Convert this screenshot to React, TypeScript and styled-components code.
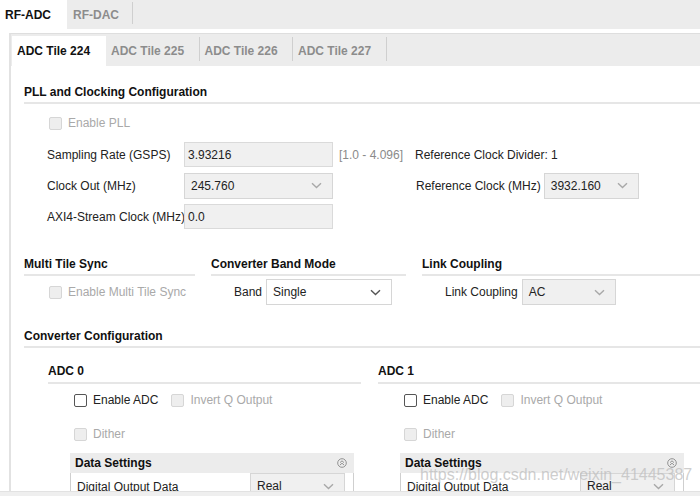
import React from 'react';
import styled, { createGlobalStyle } from 'styled-components';

const GlobalStyle = createGlobalStyle`
  html, body {
    margin: 0;
    padding: 0;
    background: #fff;
  }
  body {
    font-family: 'Liberation Sans', Arial, sans-serif;
    font-size: 12px;
    color: #222;
  }
`;

// 작은 v 모양 화살표
const Chevron = ({ dark }: { dark?: boolean }) => (
  <svg width="11" height="7" viewBox="0 0 11 7">
    <path
      d="M1 1.2 L5.5 5.5 L10 1.2"
      fill="none"
      stroke={dark ? '#555' : '#a8a8a8'}
      strokeWidth="1.4"
    />
  </svg>
);

const CollapseIcon = () => (
  <svg width="10" height="10" viewBox="0 0 10 10">
    <circle cx="5" cy="5" r="4.3" fill="none" stroke="#888" strokeWidth="0.9" />
    <path d="M3 4.6 L5 2.8 L7 4.6 M3 7 L5 5.2 L7 7" fill="none" stroke="#888" strokeWidth="0.9" />
  </svg>
);

const Check = ({ label, disabled }: { label: string; disabled?: boolean }) => (
  <CheckWrap $disabled={disabled}>
    <Box $disabled={disabled} />
    <span>{label}</span>
  </CheckWrap>
);

const Select = ({
  value,
  width,
  white,
}: {
  value: string;
  width: number;
  white?: boolean;
}) => (
  <SelectBox $width={width} $white={white}>
    <span>{value}</span>
    <Chevron dark={white} />
  </SelectBox>
);

const AdcBlock = ({ name }: { name: string }) => (
  <AdcColumn>
    <SubTitle>{name}</SubTitle>
    <AdcChecks>
      <CheckRow>
        <Check label="Enable ADC" />
        <Check label="Invert Q Output" disabled />
      </CheckRow>
      <CheckRow>
        <Check label="Dither" disabled />
      </CheckRow>
    </AdcChecks>
    <DataSettings>
      <DataHeader>
        <span>Data Settings</span>
        <CollapseIcon />
      </DataHeader>
      <DataRow>
        <DataLabel>Digital Output Data</DataLabel>
        <Select value="Real" width={95} />
      </DataRow>
    </DataSettings>
  </AdcColumn>
);

const App = () => {
  return (
    <Page>
      <GlobalStyle />
      <Main>
        <TopTabs>
          <TopTab $active>RF-ADC</TopTab>
          <TopTab>RF-DAC</TopTab>
        </TopTabs>
        <Content>
          <InnerPanel>
            <InnerTabs>
              <InnerTab $active>ADC Tile 224</InnerTab>
              <InnerTab>ADC Tile 225</InnerTab>
              <InnerTab>ADC Tile 226</InnerTab>
              <InnerTab>ADC Tile 227</InnerTab>
            </InnerTabs>
            <PanelBody>
              <SectionTitle>PLL and Clocking Configuration</SectionTitle>
              <PllCheck>
                <Check label="Enable PLL" disabled />
              </PllCheck>
              <ClockGrid>
                <Label>Sampling Rate (GSPS)</Label>
                <TextInput>3.93216</TextInput>
                <Range>[1.0 - 4.096]</Range>
                <Label>Reference Clock Divider: 1</Label>

                <Label>Clock Out (MHz)</Label>
                <Select value="245.760" width={149} />
                <span />
                <RefClock>
                  <Label>Reference Clock (MHz)</Label>
                  <Select value="3932.160" width={95} />
                </RefClock>

                <Label>AXI4-Stream Clock (MHz)</Label>
                <TextInput>0.0</TextInput>
              </ClockGrid>

              <ThreeCols>
                <div>
                  <SectionTitle>Multi Tile Sync</SectionTitle>
                  <ColRow $indent={25}>
                    <Check label="Enable Multi Tile Sync" disabled />
                  </ColRow>
                </div>
                <div>
                  <SectionTitle>Converter Band Mode</SectionTitle>
                  <ColRow $indent={23}>
                    <Label>Band</Label>
                    <Select value="Single" width={126} white />
                  </ColRow>
                </div>
                <div>
                  <SectionTitle>Link Coupling</SectionTitle>
                  <ColRow $indent={23}>
                    <Label>Link Coupling</Label>
                    <Select value="AC" width={94} />
                  </ColRow>
                </div>
              </ThreeCols>

              <ConverterTitle>Converter Configuration</ConverterTitle>
              <AdcCols>
                <AdcBlock name="ADC 0" />
                <AdcBlock name="ADC 1" />
              </AdcCols>
            </PanelBody>
          </InnerPanel>
        </Content>
      </Main>
      <BottomStrip />
      <Watermark>https://blog.csdn.net/weixin_41445387</Watermark>
    </Page>
  );
};

export default App;

const Page = styled.div`
  position: relative;
  width: 700px;
  height: 496px;
  display: flex;
  flex-direction: column;
  overflow: hidden;
`;

const Main = styled.div`
  flex: 1;
  min-height: 0;
  overflow: hidden;
`;

const TopTabs = styled.div`
  display: flex;
  height: 29px;
  background: #ececec;
`;

const TopTab = styled.div<{ $active?: boolean }>`
  width: ${(p) => (p.$active ? '67px' : '66px')};
  box-sizing: border-box;
  padding-left: ${(p) => (p.$active ? '5px' : '6px')};
  padding-top: 8px;
  font-weight: bold;
  font-size: 12px;
  background: ${(p) => (p.$active ? '#fff' : 'transparent')};
  color: ${(p) => (p.$active ? '#111' : '#8c8c8c')};
  position: relative;
  &::after {
    content: '';
    display: ${(p) => (p.$active ? 'none' : 'block')};
    position: absolute;
    right: 0;
    top: 2px;
    height: 22px;
    width: 1px;
    background: #cfcfcf;
  }
`;

const Content = styled.div`
  padding: 4px 0 0 9px;
`;

const InnerPanel = styled.div`
  border-top: 1px solid #dedede;
  border-left: 2px solid #e2e2e2;
`;

const InnerTabs = styled.div`
  display: flex;
  align-items: flex-end;
  height: 32px;
  background: #ececec;
  padding-left: 1px;
`;

const InnerTab = styled.div<{ $active?: boolean }>`
  height: 30px;
  width: ${(p) => (p.$active ? '94px' : '93.5px')};
  box-sizing: border-box;
  padding: 8px 0 0 5px;
  font-weight: bold;
  font-size: 12px;
  background: ${(p) => (p.$active ? '#fff' : 'transparent')};
  color: ${(p) => (p.$active ? '#111' : '#8c8c8c')};
  position: relative;
  &::after {
    content: '';
    display: ${(p) => (p.$active ? 'none' : 'block')};
    position: absolute;
    right: 0;
    top: 1px;
    height: 24px;
    width: 1px;
    background: #cfcfcf;
  }
`;

const PanelBody = styled.div`
  padding: 19px 0 0 13px;
`;

const SectionTitle = styled.div`
  font-weight: bold;
  font-size: 12px;
  line-height: 14px;
  color: #111;
  padding-bottom: 3px;
  border-bottom: 2px solid #e6e6e6;
`;

const ConverterTitle = styled(SectionTitle)`
  margin-top: 24px;
`;

const SubTitle = styled(SectionTitle)`
  padding-bottom: 4px;
`;

const CheckWrap = styled.label<{ $disabled?: boolean }>`
  display: inline-flex;
  align-items: center;
  gap: 6px;
  font-size: 12px;
  color: ${(p) => (p.$disabled ? '#a9a9a9' : '#222')};
  white-space: nowrap;
`;

const Box = styled.span<{ $disabled?: boolean }>`
  display: inline-block;
  width: 13px;
  height: 13px;
  box-sizing: border-box;
  border-radius: 2px;
  border: 1px solid ${(p) => (p.$disabled ? '#d6d6d6' : '#555')};
  background: ${(p) => (p.$disabled ? '#eeeeee' : '#fff')};
`;

const PllCheck = styled.div`
  padding: 12px 0 0 25px;
  height: 14px;
`;

const ClockGrid = styled.div`
  display: grid;
  grid-template-columns: 137px 149px 82px auto;
  grid-auto-rows: 25px;
  row-gap: 6px;
  align-items: center;
  margin: 12px 0 0 23px;
`;

const Label = styled.span`
  font-size: 12px;
  color: #222;
  white-space: nowrap;
`;

const Range = styled.span`
  font-size: 12px;
  color: #8a8a8a;
  padding-left: 6px;
  white-space: nowrap;
`;

const TextInput = styled.div`
  height: 25px;
  box-sizing: border-box;
  border: 1px solid #dadada;
  background: #f0f0f0;
  padding: 5px 3px;
  font-size: 12px;
  color: #222;
`;

const SelectBox = styled.div<{ $width: number; $white?: boolean }>`
  width: ${(p) => p.$width}px;
  height: 26px;
  box-sizing: border-box;
  border: 1px solid #d6d6d6;
  background: ${(p) => (p.$white ? '#fff' : '#f0f0f0')};
  display: flex;
  align-items: center;
  justify-content: space-between;
  padding: 0 10px 0 6px;
  font-size: 12px;
  color: #222;
  flex-shrink: 0;
`;

const RefClock = styled.div`
  display: flex;
  align-items: center;
  gap: 3px;
  padding-left: 1px;
`;

const ThreeCols = styled.div`
  display: grid;
  grid-template-columns: 171px 195px 1fr;
  column-gap: 16px;
  margin-top: 28px;
`;

const ColRow = styled.div<{ $indent: number }>`
  display: flex;
  align-items: center;
  gap: 4px;
  height: 26px;
  margin-top: 3px;
  padding-left: ${(p) => p.$indent}px;
`;

const AdcCols = styled.div`
  display: grid;
  grid-template-columns: 313px 1fr;
  column-gap: 17px;
  margin: 16px 0 0 24px;
`;

const AdcColumn = styled.div``;

const AdcChecks = styled.div`
  padding: 9px 0 0 26px;
  display: flex;
  flex-direction: column;
  gap: 20px;
`;

const CheckRow = styled.div`
  display: flex;
  align-items: center;
  gap: 13px;
  height: 14px;
`;

const DataSettings = styled.div`
  margin: 12px 0 0 22px;
  width: 284px;
`;

const DataHeader = styled.div`
  height: 20px;
  background: #ececec;
  display: flex;
  align-items: center;
  justify-content: space-between;
  padding: 0 7px 0 5px;
  font-weight: bold;
  font-size: 12px;
  color: #111;
`;

const DataRow = styled.div`
  display: flex;
  align-items: flex-start;
  border-left: 1px solid #cfcfcf;
  border-right: 1px solid #cfcfcf;
  padding: 0 0 0 6px;
  height: 28px;
`;

const DataLabel = styled.span`
  width: 173px;
  padding-top: 7px;
  font-size: 12px;
  color: #222;
`;

const BottomStrip = styled.div`
  height: 4px;
  flex-shrink: 0;
  background: #efefef;
  border-top: 1px solid #e2e2e2;
`;

const Watermark = styled.div`
  position: absolute;
  left: 420px;
  top: 466px;
  font-family: 'Liberation Sans', Arial, sans-serif;
  font-size: 16px;
  color: rgba(190, 190, 190, 0.75);
  white-space: nowrap;
  pointer-events: none;
`;
